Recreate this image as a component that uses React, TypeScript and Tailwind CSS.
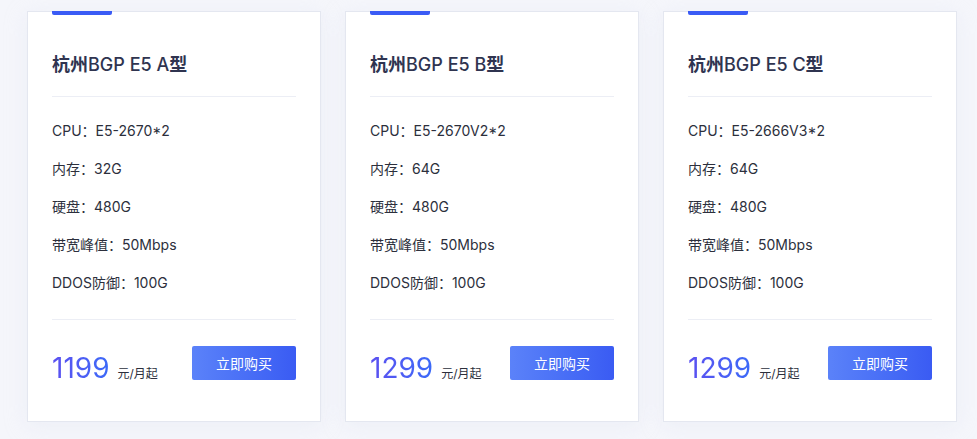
import React from "react";

const cards = [
  { t: "A", cpu: "E5-2670*2", mem: "32G", price: "1199" },
  { t: "B", cpu: "E5-2670V2*2", mem: "64G", price: "1299" },
  { t: "C", cpu: "E5-2666V3*2", mem: "64G", price: "1299" },
];

const font = { fontFamily: 'Inter, "Noto Sans CJK SC", sans-serif' };

export default function App() {
  return (
    <div className="w-[977px] h-[439px] overflow-hidden bg-[#f5f6fb]" style={font}>
      <div className="flex gap-6 pl-[27px] pt-[11px]">
        {cards.map((c) => (
          <div
            key={c.t}
            className="relative w-[294px] h-[411px] shrink-0 border border-[#e4e7f0] bg-white px-6 shadow-[0_4px_20px_rgba(220,225,240,0.35)]"
          >
            <div className="absolute top-[-1px] left-6 w-[60px] h-[4px] rounded-b-[2px] bg-[#3a5bf5]" />
            <div className="pt-[40px] text-[18px] leading-[26px] text-[#2f3450]">
              <span className="font-bold">杭州</span>
              <span className="font-medium">BGP E5 {c.t}</span>
              <span className="font-bold">型</span>
            </div>
            <div className="mt-[18px] h-px bg-[#eceef5]" />
            <div className="mt-[24px] flex flex-col gap-[18px] text-[14px] leading-[20px] text-[#2c2f3c]">
              <div>CPU：{c.cpu}</div>
              <div>内存：{c.mem}</div>
              <div>硬盘：480G</div>
              <div>带宽峰值：50Mbps</div>
              <div>DDOS防御：100G</div>
            </div>
            <div className="mt-[26px] h-px bg-[#eceef5]" />
            <div className="mt-[26px] flex items-start justify-between">
              <div className="flex items-baseline gap-[8px] pt-[5px]">
                <span className="text-[28px] leading-[34px] font-normal bg-gradient-to-r from-[#5a4ff0] to-[#3a6af8] bg-clip-text text-transparent">
                  {c.price}
                </span>
                <span className="text-[12px] text-[#2c2f3c]">元/月起</span>
              </div>
              <button className="w-[104px] h-[34px] rounded-[2px] bg-gradient-to-r from-[#5b82f9] to-[#3a5bf3] text-white text-[14px]">
                立即购买
              </button>
            </div>
          </div>
        ))}
      </div>
    </div>
  );
}
